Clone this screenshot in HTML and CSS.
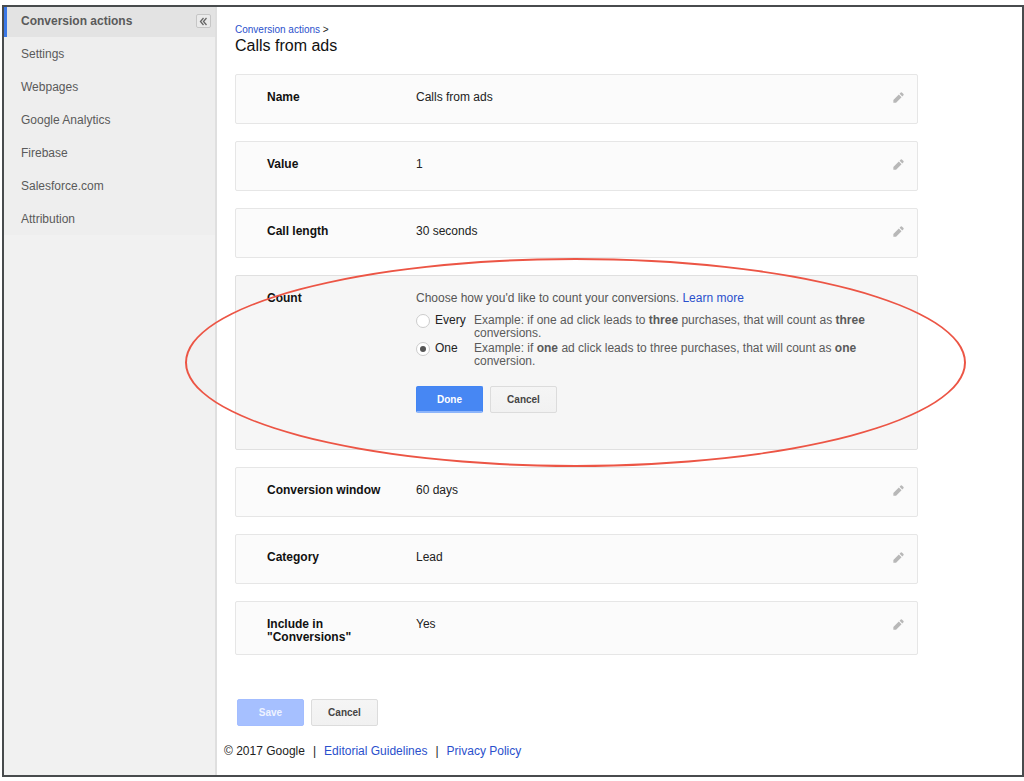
FILE: index.html
```html
<!DOCTYPE html>
<html lang="en">
<head>
<meta charset="utf-8">
<title>Calls from ads</title>
<link rel="stylesheet" href="styles.css">
</head>
<body>
<svg class="sprite" aria-hidden="true">
  <symbol id="pencil" viewBox="0 0 24 24"><path d="M2.500 16.500V21.500h5L17.600 11.400l-5-5zM21.200 7.800a1.500 1.500 0 0 0 0-2.100l-2.900-2.900a1.500 1.500 0 0 0-2.100 0l-2.200 2.200 5 5z"/></symbol>
</svg>
<div class="frame">
  <aside class="sidebar">
    <nav class="nav">
      <div class="nav-head">
        <a href="#">Conversion actions</a>
        <button class="collapse" type="button" aria-label="Collapse">
          <svg viewBox="0 0 9 9"><path d="M4.500 1 1.500 4.500 4.500 8M7.500 1 4.500 4.500 7.500 8"/></svg>
        </button>
      </div>
      <a class="nav-item" href="#">Settings</a>
      <a class="nav-item" href="#">Webpages</a>
      <a class="nav-item" href="#">Google Analytics</a>
      <a class="nav-item" href="#">Firebase</a>
      <a class="nav-item" href="#">Salesforce.com</a>
      <a class="nav-item" href="#">Attribution</a>
    </nav>
  </aside>
  <div class="page">
    <main class="content">
      <div class="crumb"><a href="#">Conversion actions</a> &gt;</div>
      <h1 class="title">Calls from ads</h1>
      <div class="cards">
        <section class="card">
          <h2 class="label">Name</h2><div class="value">Calls from ads</div>
          <button class="edit" type="button" aria-label="Edit name"><svg><use href="#pencil"/></svg></button>
        </section>
        <section class="card">
          <h2 class="label">Value</h2><div class="value">1</div>
          <button class="edit" type="button" aria-label="Edit value"><svg><use href="#pencil"/></svg></button>
        </section>
        <section class="card">
          <h2 class="label">Call length</h2><div class="value">30 seconds</div>
          <button class="edit" type="button" aria-label="Edit call length"><svg><use href="#pencil"/></svg></button>
        </section>
        <section class="card card-open">
          <h2 class="label">Count</h2>
          <div class="value">
            <p class="hint">Choose how you'd like to count your conversions. <a href="#">Learn more</a></p>
            <div class="options">
              <div class="option">
                <input type="radio" name="count" id="every">
                <label for="every">Every</label>
                <p>Example: if one ad click leads to <b>three</b> purchases, that will count as <b>three</b> conversions.</p>
              </div>
              <div class="option">
                <input type="radio" name="count" id="one" checked>
                <label for="one">One</label>
                <p>Example: if <b>one</b> ad click leads to three purchases, that will count as <b>one</b> conversion.</p>
              </div>
            </div>
            <div class="buttons">
              <button class="btn btn-primary" type="button">Done</button>
              <button class="btn" type="button">Cancel</button>
            </div>
          </div>
          <div class="ring"></div>
        </section>
        <section class="card">
          <h2 class="label">Conversion window</h2><div class="value">60 days</div>
          <button class="edit" type="button" aria-label="Edit conversion window"><svg><use href="#pencil"/></svg></button>
        </section>
        <section class="card">
          <h2 class="label">Category</h2><div class="value">Lead</div>
          <button class="edit" type="button" aria-label="Edit category"><svg><use href="#pencil"/></svg></button>
        </section>
        <section class="card">
          <h2 class="label">Include in "Conversions"</h2><div class="value">Yes</div>
          <button class="edit" type="button" aria-label="Edit include in conversions"><svg><use href="#pencil"/></svg></button>
        </section>
      </div>
      <div class="buttons form-buttons">
        <button class="btn btn-primary" type="button" disabled>Save</button>
        <button class="btn" type="button">Cancel</button>
      </div>
    </main>
    <footer class="footer">
      <span>© 2017 Google</span><span>|</span><a href="#">Editorial Guidelines</a><span>|</span><a href="#">Privacy Policy</a>
    </footer>
  </div>
</div>
</body>
</html>
```
FILE: styles.css
```css
* { box-sizing: border-box; }
body {
  margin: 0;
  padding: 5px 0 4px 2px;
  background: #fff;
  color: #222;
  font: 12px/13px "Liberation Sans", Arial, sans-serif;
}
h1, h2, p { margin: 0; font-size: inherit; }
a { color: #2a50cc; text-decoration: none; }
button { font-family: inherit; }
.sprite { display: none; }

.frame {
  display: flex;
  min-height: calc(100vh - 9px);
  border: 2px solid #484b4d;
}

.sidebar {
  flex: 0 0 213px;
  background: #f1f1f1;
  border-right: 2px solid #dfdfdf;
}
.nav { background: #eee; }
.nav-head {
  display: flex;
  align-items: center;
  justify-content: space-between;
  height: 30px;
  padding: 0 4px 2px 14px;
  border-left: 3px solid #3b78e7;
  background: #e3e3e3;
  font-weight: bold;
}
.nav a { color: #5a5a5a; }
.nav-item {
  display: flex;
  align-items: center;
  height: 33px;
  padding: 2px 0 0 17px;
}
.collapse {
  display: grid;
  place-items: center;
  width: 15px;
  height: 14px;
  padding: 0;
  border: 1px solid #c6c6c6;
  border-radius: 2px;
  background: #eaeaea;
}
.collapse svg {
  width: 9px;
  height: 9px;
  fill: none;
  stroke: #666;
  stroke-width: 1.3;
}

.page { flex: 1; min-width: 0; }
.content { padding: 16px 104px 0 18px; }
.crumb { font-size: 10px; line-height: 13px; }
.title {
  font-size: 16px;
  line-height: 20px;
  font-weight: normal;
  color: #111;
}

.cards {
  display: flex;
  flex-direction: column;
  gap: 17px;
  margin-top: 18px;
}
.card {
  display: flex;
  align-items: flex-start;
  position: relative;
  min-height: 50px;
  padding: 16px 12px 10px 31px;
  border: 1px solid #e6e6e6;
  border-radius: 2px;
  background: #fbfbfb;
}
.card-open {
  padding-bottom: 36px;
  border-color: #e0e0e0;
  background: #f6f6f6;
}
.label {
  flex: 0 0 149px;
  padding-right: 24px;
  color: #111;
}
.value { flex: 1; min-width: 0; }
.edit {
  padding: 0;
  border: 0;
  background: none;
  line-height: 0;
}
.edit svg {
  width: 13px;
  height: 13px;
  fill: #b8b8b8;
}

.hint { color: #555; }
.options {
  display: flex;
  flex-direction: column;
  gap: 2px;
  margin-top: 9px;
}
.option {
  display: grid;
  grid-template-columns: 19px 39px minmax(0, 400px);
  align-items: start;
}
.option p { color: #5a5a5a; }
.option input {
  appearance: none;
  display: grid;
  place-items: center;
  width: 14px;
  height: 14px;
  margin: 0;
  border: 1px solid #ccc;
  border-radius: 50%;
  background: #fff;
}
.option input:checked::before {
  content: "";
  width: 6px;
  height: 6px;
  border-radius: 50%;
  background: #555;
}

.buttons {
  display: flex;
  gap: 7px;
  margin-top: 18px;
}
.form-buttons { margin: 44px 0 0 2px; }
.btn {
  width: 67px;
  height: 27px;
  padding: 0;
  border: 1px solid #dcdcdc;
  border-radius: 2px;
  background: linear-gradient(#f5f5f5, #f1f1f1);
  color: #444;
  font-size: 10px;
  font-weight: bold;
}
.btn-primary {
  border-color: #4285f4;
  border-bottom: 2px solid #8db5fa;
  background: #4787f3;
  color: #fff;
}
.btn-primary:disabled {
  border: 1px solid #a3bdff;
  background: #a6c0ff;
  color: #eef3ff;
}

/* Hand-drawn highlight round the open card */
.ring {
  position: absolute;
  inset: -18px -49px -18px -51px;
  border: 2px solid #ec5545;
  border-radius: 50%;
  pointer-events: none;
}

.footer {
  display: flex;
  gap: 8px;
  padding: 19px 0 17px 7px;
}
```
